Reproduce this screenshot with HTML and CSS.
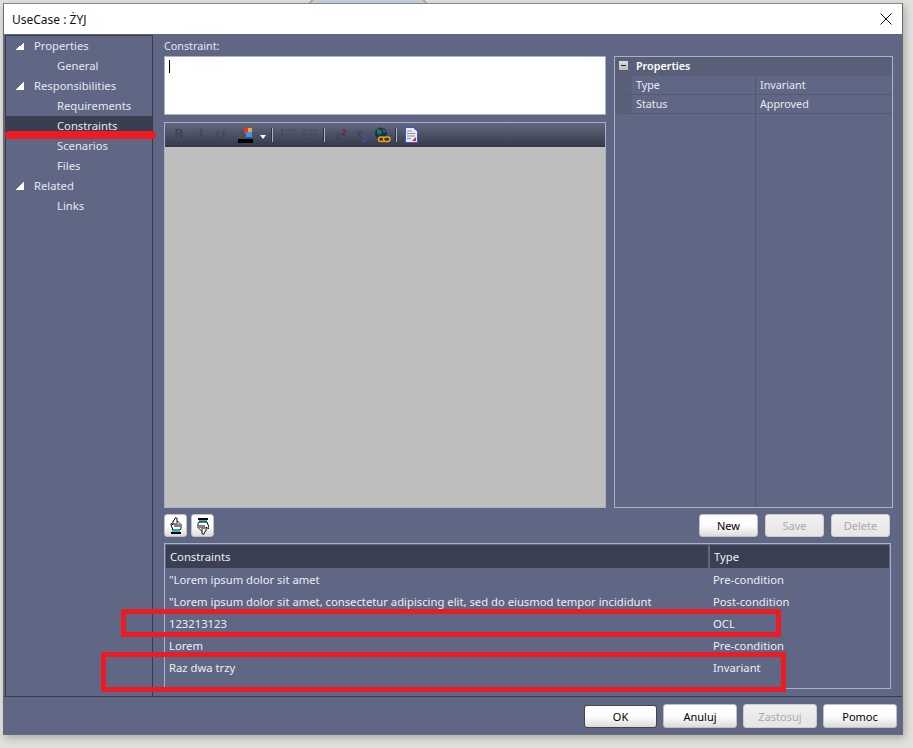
FILE: index.html
```html
<!DOCTYPE html>
<html lang="pl">
<head>
<meta charset="utf-8">
<title>UseCase : ŻYJ</title>
<link rel="stylesheet" href="styles.css">
</head>
<body>
<div class="behind"></div>
<div class="window">
  <header class="titlebar">
    <span class="title">UseCase : ŻYJ</span>
    <svg class="close" width="12" height="12" viewBox="0 0 12 12"><path d="M.5.5l11 11M11.5.5l-11 11" stroke="#111" fill="none"/></svg>
  </header>
  <div class="main">
    <nav class="tree">
      <div class="node"><i class="tri"></i>Properties</div>
      <div class="leaf">General</div>
      <div class="node"><i class="tri"></i>Responsibilities</div>
      <div class="leaf">Requirements</div>
      <div class="leaf selected">Constraints</div>
      <div class="leaf">Scenarios</div>
      <div class="leaf">Files</div>
      <div class="node"><i class="tri"></i>Related</div>
      <div class="leaf">Links</div>
    </nav>
    <section class="content">
      <div class="upper">
        <div class="editor-col">
          <label class="label">Constraint:</label>
          <div class="textbox"><i class="caret"></i></div>
          <div class="rich">
            <div class="toolbar">
              <b class="tb-b">B</b>
              <i class="tb-i">I</i>
              <u class="tb-u">U</u>
              <svg class="tb-color" width="16" height="16" viewBox="0 0 16 16"><path d="M1 10l3-7 3 7" stroke="#4b5062" fill="none"/><rect x="6" y="0" width="5" height="5" fill="#ee3030"/><rect x="10" y="0" width="4" height="4" fill="#f5a030"/><rect x="8" y="4" width="6" height="5" fill="#3a96ee"/><rect x="0" y="11" width="15" height="4" fill="#000"/></svg>
              <i class="drop"></i>
              <i class="sep"></i>
              <svg class="tb-list" width="14" height="14" viewBox="0 0 14 14"><path d="M0 2h2M0 7h2M0 12h2" stroke="#3f4456" stroke-width="2"/><path d="M4 2h10M4 7h10M4 12h10" stroke="#474c5f"/></svg>
              <svg class="tb-list" width="15" height="16" viewBox="0 0 15 16"><path d="M1 1v4M0 7h3v2H0v2h3M0 13h3v2H0" stroke="#474c5f" fill="none"/><path d="M5 3h10M5 8h10M5 13h10" stroke="#474c5f"/></svg>
              <i class="sep sep-b"></i>
              <span class="tb-sup">x<sup>2</sup></span>
              <span class="tb-sub">x<sub>2</sub></span>
              <svg class="tb-globe" width="17" height="16" viewBox="0 0 17 16"><circle cx="7" cy="6.500" r="6" fill="#14305e"/><path d="M3 2l4 1 1 3-3 2-2-2zM8 1l4 3-2 2z" fill="#2e7a3a"/><rect x="4.500" y="10" width="6" height="4.500" rx="2.200" fill="#3a3420" stroke="#e8a814" stroke-width="1.500"/><rect x="9.500" y="10" width="6.500" height="4.500" rx="2.200" fill="#3a3420" stroke="#e8a814" stroke-width="1.500"/></svg>
              <i class="sep sep-c"></i>
              <svg class="tb-doc" width="13" height="16" viewBox="0 0 13 16"><path d="M.5.500h8l4 4v11H.5z" fill="#e8ecf8" stroke="#3a58c8"/><path d="M2 4h5M2 6.500h8M2 9h8M2 11.500h4" stroke="#8890a0"/><path d="M7 14l4-4v4z" fill="#e02020"/></svg>
            </div>
            <div class="canvas"></div>
          </div>
        </div>
        <aside class="props">
          <div class="props-head"><i class="minus"></i><b>Properties</b></div>
          <div class="props-row"><span class="k">Type</span><span class="v">Invariant</span></div>
          <div class="props-row"><span class="k">Status</span><span class="v">Approved</span></div>
          <div class="props-rest"></div>
        </aside>
      </div>
      <div class="actions">
        <div class="move">
          <button class="btn icon-btn"><svg width="12" height="18" viewBox="0 0 12 18"><path d="M5.500.500l1.500 1v4l1-1 1 1 1 1 1 1v4l-1 1.500H3L1.500 9 .8 7l1.200-.5L3 8V4l1-.5z" fill="#fff" stroke="#000"/><path d="M5 6v4M7 6v4M9 7v3" stroke="#000"/><rect x="2" y="13" width="8" height="2" fill="#18c0d0"/><rect x="1" y="15" width="10" height="2" fill="#000"/></svg></button>
          <button class="btn icon-btn"><svg width="12" height="18" viewBox="0 0 12 18"><rect x="1" y="1" width="10" height="2" fill="#000"/><rect x="2" y="3" width="8" height="2" fill="#18c0d0"/><path d="M6.500 17.500l-1.500-1v-4l-1 1-1-1-1-1-1-1v-4l1-1.500h8l1.500 4 .7 2-1.200.5L9 10v4l-1 .5z" fill="#fff" stroke="#000"/><path d="M7 12V8M5 12V8M3 11V8" stroke="#000"/></svg></button>
        </div>
        <div class="crud">
          <button class="btn crud-btn">New</button>
          <button class="btn crud-btn" disabled>Save</button>
          <button class="btn crud-btn" disabled>Delete</button>
        </div>
      </div>
      <div class="table">
        <div class="thead"><div class="c1">Constraints</div><div class="c2">Type</div></div>
        <div class="trow"><div class="c1">"Lorem ipsum dolor sit amet</div><div class="c2">Pre-condition</div></div>
        <div class="trow"><div class="c1">"Lorem ipsum dolor sit amet, consectetur adipiscing elit, sed do eiusmod tempor incididunt</div><div class="c2">Post-condition</div></div>
        <div class="trow"><div class="c1">123213123</div><div class="c2">OCL</div></div>
        <div class="trow"><div class="c1">Lorem</div><div class="c2">Pre-condition</div></div>
        <div class="trow"><div class="c1">Raz dwa trzy</div><div class="c2">Invariant</div></div>
      </div>
    </section>
  </div>
  <footer class="footer">
    <button class="btn foot-btn default">OK</button>
    <button class="btn foot-btn">Anuluj</button>
    <button class="btn foot-btn" disabled>Zastosuj</button>
    <button class="btn foot-btn">Pomoc</button>
  </footer>
</div>
<div class="mark mark-tree"></div>
<div class="mark mark-row1"></div>
<div class="mark mark-row2"></div>
</body>
</html>
```

FILE: styles.css
```css
* { box-sizing: border-box; }
html, body { margin: 0; padding: 0; }
body {
  width: 913px;
  height: 748px;
  overflow: hidden;
  position: relative;
  background: #e3e1dd;
  font-family: "Noto Sans", "DejaVu Sans", sans-serif;
  font-size: 11.250px;
  color: #fff;
  padding: 3px 0 0 3px;
}
.behind {
  position: absolute;
  left: 285px;
  top: -22px;
  width: 166px;
  height: 166px;
  background: #c5d3e0;
  border: 1px solid #777;
  border-radius: 50%;
}
.window {
  position: relative;
  width: 900px;
  height: 732px;
  background: #5f6784;
  border: 1px solid #6b6b70;
  border-top-color: #8a8a8a;
  box-shadow: 2px 3px 8px rgba(0,0,0,.25);
  display: flex;
  flex-direction: column;
}
.titlebar {
  height: 30px;
  flex: none;
  background: #fff;
  color: #111;
  display: flex;
  align-items: center;
  justify-content: space-between;
  padding: 0 10px 0 8px;
  font-size: 12px;
}
.main {
  height: 663px;
  flex: none;
  display: flex;
  border-bottom: 1px solid #373c4e;
}
.tree {
  width: 148px;
  flex: none;
  margin: 1px 0 0 1px;
  border: 1px solid #373c4e;
  border-bottom: 0;
  color: #e6e8ef;
}
.node, .leaf { height: 20px; line-height: 20px; white-space: nowrap; }
.node { padding-left: 10px; display: flex; align-items: center; }
.leaf { padding-left: 51px; }
.selected { background: #3a3e50; }
.tri {
  width: 8px;
  height: 8px;
  margin-right: 10px;
  background: linear-gradient(135deg, transparent 50%, #fff 50%);
}
.content {
  flex: 1;
  padding: 7px 0 0 11px;
  min-width: 0;
}
.upper { display: flex; gap: 8px; height: 467px; }
.editor-col { width: 442px; flex: none; display: flex; flex-direction: column; }
.label { height: 15px; line-height: 11px; color: #e6e8ef; font-size: 10.750px; }
.textbox {
  height: 59px;
  flex: none;
  background: #fff;
  border: 1px solid #a9b0c8;
  padding: 3px 4px;
}
.caret { display: block; width: 1px; height: 13px; background: #000; }
.rich {
  flex: 1;
  margin-top: 7px;
  border: 1px solid #a9b0c8;
  display: flex;
  flex-direction: column;
}
.toolbar {
  height: 24px;
  flex: none;
  background: linear-gradient(#62697f, #343849);
  display: flex;
  align-items: center;
  padding-left: 9px;
  color: #3f4355;
}
.tb-b { font: bold 14px "Liberation Serif", serif; width: 24px; }
.tb-i { font: italic 14px "Liberation Serif", serif; width: 18px; }
.tb-u { font: 13px "Liberation Sans", sans-serif; width: 22px; }
.tb-color { margin-right: 6px; margin-top: 1px; }
.drop { width: 0; height: 0; border: 3px solid transparent; border-top: 4px solid #fff; border-bottom: 0; margin-right: 6px; margin-top: 3px; }
.sep { width: 1px; height: 14px; background: #aab0c4; margin-right: 8px; box-shadow: -1px 0 #2d3040; }
.tb-list { margin-right: 8px; }
.sep-b { margin-left: -2px; margin-right: 10px; }
.tb-sup { font: 13px "Liberation Sans", sans-serif; width: 21px; color: #3f4355; }
.tb-sup sup { color: #7a1020; font-size: 9px; }
.tb-sub { font: 13px "Liberation Sans", sans-serif; width: 18px; color: #3f4355; }
.tb-sub sub { color: #3a58c8; font-size: 9px; }
.tb-globe { margin-right: 5px; }
.sep-c { margin-right: 8px; }
.canvas { flex: 1; background: #bebebe; }
.props {
  width: 279px;
  flex: none;
  margin-top: 15px;
  border: 1px solid #a9b0c8;
  display: flex;
  flex-direction: column;
  position: relative;
}
.props::before {
  content: "";
  position: absolute;
  left: 140px;
  top: 19px;
  bottom: 0;
  width: 1px;
  background: #535a75;
}
.props-head {
  height: 19px;
  background: #585f77;
  display: flex;
  align-items: center;
  padding: 0 0 2px 4px;
  color: #fff;
}
.props-head b { font-weight: 600; font-size: 10.750px; margin-left: 8px; }
.minus {
  width: 9px;
  height: 9px;
  background: linear-gradient(#ddd, #bbb);
  position: relative;
  display: block;
}
.minus::after { content: ""; position: absolute; left: 2px; right: 2px; top: 4px; height: 1px; background: #222; }
.props-row {
  height: 19px;
  display: flex;
  align-items: center;
  border-bottom: 1px solid #535a75;
  border-left: 17px solid #585f77;
  color: #e8eaf0;
  font-size: 10.750px;
}
.k { width: 124px; padding-left: 4px; }
.v { padding-left: 4px; }
.props-rest { flex: 1; }
.actions {
  display: flex;
  justify-content: space-between;
  margin-top: 6px;
  height: 24px;
  padding-right: 12px;
}
.move, .crud { display: flex; }
.move { gap: 4px; }
.crud { gap: 7px; }
.btn {
  font-family: inherit;
  font-size: 11px;
  color: #000;
  height: 23px;
  padding: 0;
  border: 1px solid #c0c0c0;
  border-radius: 3px;
  background: linear-gradient(#fdfdfd 50%, #dcdcdc);
  display: flex;
  align-items: center;
  justify-content: center;
}
.btn[disabled] { color: #aaa; background: linear-gradient(#f0f0f0, #e6e6e6); border-color: #ccc; }
.icon-btn { width: 23px; }
.crud-btn { width: 59px; }
.table {
  width: 727px;
  height: 146px;
  margin-top: 5px;
  border: 1px solid #a9b0c8;
  padding: 1px;
}
.thead, .trow { display: flex; align-items: center; }
.thead { height: 23px; background: #3a3f51; color: #f0f1f5; }
.trow { height: 22px; color: #eceef3; }
.c1 { width: 544px; flex: none; padding-left: 3px; white-space: nowrap; }
.thead .c1 { border-right: 2px solid #5f6784; height: 23px; line-height: 23px; padding-left: 4px; }
.c2 { padding-left: 3px; }
.thead .c2 { padding-left: 4px; }
.footer {
  flex: 1;
  display: flex;
  justify-content: flex-end;
  gap: 6px;
  padding: 7px 5px 0 0;
}
.foot-btn { width: 74px; height: 24px; }
.foot-btn.default { width: 73px; height: 23px; margin-top: 1px; border: 1px solid #444; }
.mark { position: absolute; border: 5px solid #ed1c24; }
.mark-tree {
  left: 5px;
  top: 131px;
  width: 151px;
  height: 8px;
  border: 0;
  background: #ed1c24;
  border-radius: 4px;
}
.mark-row1 { left: 121px; top: 609px; width: 660px; height: 28px; }
.mark-row2 { left: 101px; top: 652px; width: 685px; height: 40px; }
```
